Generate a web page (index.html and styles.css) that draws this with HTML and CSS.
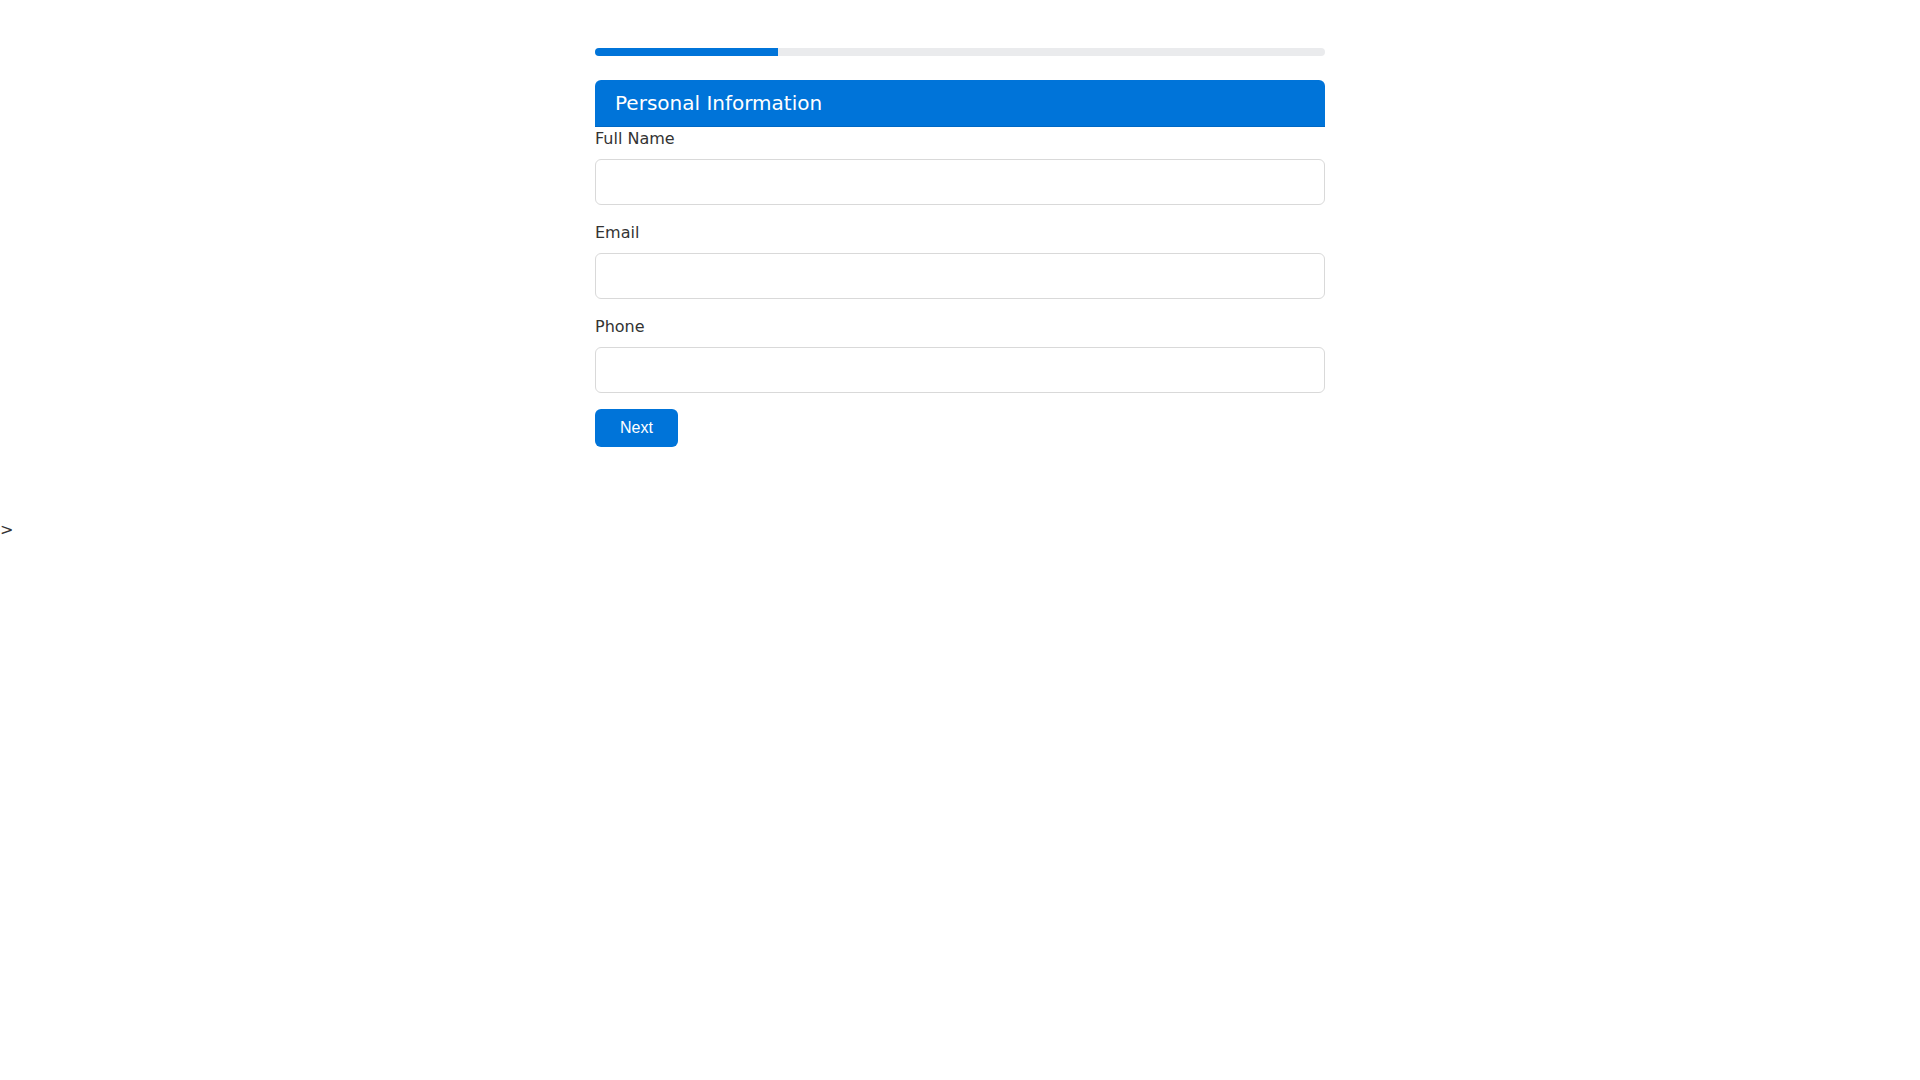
FILE: index.html
```html
<!DOCTYPE html>
<html>
<head>
<meta charset="utf-8">
<link rel="stylesheet" href="styles.css">
</head>
<body>
<div class="wizard">
  <div class="progress"><div class="progress-fill" style="width:25%"></div></div>
  <div class="step-header">Personal Information</div>
  <form class="step-form">
    <div class="field">
      <label class="field-label">Full Name</label>
      <input class="field-input" type="text">
    </div>
    <div class="field">
      <label class="field-label">Email</label>
      <input class="field-input" type="text">
    </div>
    <div class="field">
      <label class="field-label">Phone</label>
      <input class="field-input" type="text">
    </div>
    <button class="btn-next" type="button">Next</button>
  </form>
</div>
<div class="stray">&gt;</div>
</body>
</html>
```
FILE: styles.css
```css
html, body {
  margin: 0;
  padding: 0;
  background: #fff;
  font-family: "DejaVu Sans", sans-serif;
  color: #333;
}
.wizard {
  width: 730px;
  margin: 48px auto 0;
}
.progress {
  height: 8px;
  background: #eaebed;
  border-radius: 4px;
  overflow: hidden;
}
.progress-fill {
  height: 100%;
  background: #0074d9;
}
.step-header {
  margin-top: 24px;
  background: #0074d9;
  color: #fff;
  font-size: 20px;
  line-height: 26px;
  padding: 10px 20px;
  border-radius: 6px 6px 0 0;
  border-bottom: 1px solid #0068c4;
  box-sizing: border-box;
  height: 47px;
}
.step-form {
  margin: 0;
}
.field {
  margin-bottom: 18px;
}
.field-label {
  display: block;
  font-size: 16px;
  line-height: 19px;
  margin-top: 2px;
  margin-bottom: 11px;
}
.field-input {
  display: block;
  width: 100%;
  box-sizing: border-box;
  height: 46px;
  border: 1px solid #d9d9d9;
  border-radius: 6px;
  margin: 0;
  font-size: 16px;
  padding: 0 10px;
  background: #fff;
}
.btn-next {
  display: block;
  background: #0074d9;
  color: #fff;
  border: none;
  border-radius: 6px;
  font-family: "Liberation Sans", Arial, sans-serif;
  font-size: 16px;
  line-height: 18px;
  padding: 10px 24px;
  width: 83px;
  height: 38px;
  margin-top: -2px;
}
.stray {
  margin-top: 73px;
  font-size: 16px;
  line-height: 19px;
}
```
